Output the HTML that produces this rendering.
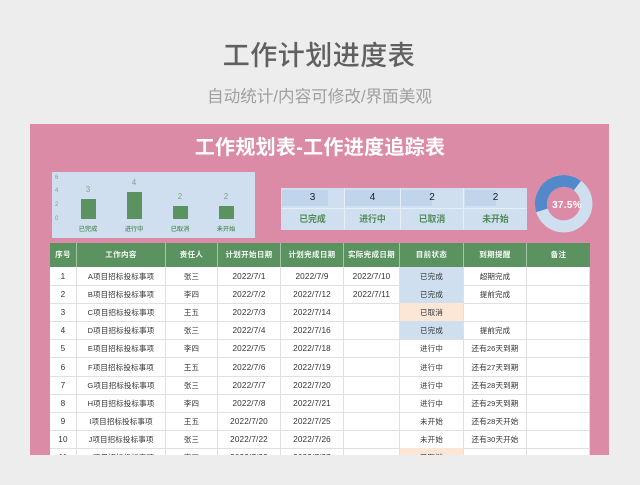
<!DOCTYPE html>
<html lang="zh">
<head>
<meta charset="utf-8">
<title>工作计划进度表</title>
<style>
html,body{margin:0;padding:0;width:640px;height:485px;overflow:hidden;background:#ededed}
body{position:relative;font-family:"Liberation Sans","Noto Sans CJK SC",sans-serif}
#w{position:absolute;left:0;top:0;width:640px;height:485px;background:#ededed;filter:blur(.3px)}
.a{position:absolute;text-align:center;white-space:nowrap}
#t1{left:0;width:638px;top:36.5px;font-size:27px;line-height:38px;color:#606060;letter-spacing:.5px;font-weight:500}
#t2{left:0;width:639px;top:86px;font-size:16.6px;line-height:22px;color:#a0a0a0}
#p{position:absolute;left:30px;top:124px;width:579px;height:331px;background:#db8ba6;overflow:hidden}
#t3{left:0;width:640px;top:134px;font-size:20px;line-height:28px;font-weight:bold;color:#fff;letter-spacing:.3px}
#chart{position:absolute;left:52px;top:172px;width:203px;height:66px;background:#d0dff0}
.bar{position:absolute;background:#5b9360;width:15px}
.yl{position:absolute;font-size:6px;line-height:8px;color:#8a9aa8;left:55px}
.vl{position:absolute;font-size:8px;line-height:10px;color:#7ea583;width:30px;text-align:center}
.xl{position:absolute;font-size:6.2px;line-height:9px;color:#4f8a55;width:40px;text-align:center;top:224.5px;font-weight:500}
#kpi{position:absolute;left:281px;top:188px;width:246px;height:42px;background:#d0dff0}
.kb{position:absolute;background:#c0d5ec;top:190px;height:16px}
.kl{position:absolute;background:#e6eef7}
.kn{position:absolute;top:191px;font-size:10px;line-height:14px;color:#222;text-align:center}
.kt{position:absolute;top:212px;font-size:8.9px;line-height:14px;color:#4f8a55;text-align:center;font-weight:700}
#tb{position:absolute;left:50px;top:243px;width:540px;height:212px;background:#fff;overflow:hidden}
.h{position:absolute;left:0;top:0;width:540px;height:24px;background:#5b9360}
.c{position:absolute;top:0;bottom:0;text-align:center;white-space:nowrap;overflow:hidden}
.r{position:absolute;left:0;width:540px;height:18px;font-size:7.5px;line-height:19px;color:#333;letter-spacing:.15px;border-bottom:1px solid #e0e0e0;box-sizing:content-box}
.h .c{font-size:7.5px;line-height:24px;color:#f4f8f4;font-weight:bold;letter-spacing:.35px;border-right:1px solid #a5c4a8;box-sizing:border-box}
.r .c{border-right:1px solid #e0e0e0;box-sizing:border-box}
.c1{left:0;width:27px}.c2{left:27px;width:89px}.c3{left:116px;width:52px}.c4{left:168px;width:63px}.c5{left:231px;width:63px}.c6{left:294px;width:56px}.c7{left:350px;width:64px}.c8{left:414px;width:63px}.c9{left:477px;width:63px}
.r .c1,.r .c4,.r .c5,.r .c6{font-size:8.2px}
.b{background:#d0dff0}.o{background:#fce6d6}
</style>
</head>
<body>
<div id="w">
<div class="a" id="t1">工作计划进度表</div>
<div class="a" id="t2">自动统计/内容可修改/界面美观</div>
<div id="p"></div>
<div class="a" id="t3">工作规划表-工作进度追踪表</div>

<div id="chart"></div>
<div class="yl" style="top:174px">6</div>
<div class="yl" style="top:187px">4</div>
<div class="yl" style="top:201px">2</div>
<div class="yl" style="top:215px">0</div>
<div class="bar" style="left:81px;top:199px;height:20px"></div>
<div class="bar" style="left:127px;top:192px;height:27px"></div>
<div class="bar" style="left:173px;top:205.5px;height:13.5px"></div>
<div class="bar" style="left:219px;top:205.5px;height:13.5px"></div>
<div class="vl" style="left:73px;top:185px">3</div>
<div class="vl" style="left:119px;top:178px">4</div>
<div class="vl" style="left:165px;top:192px">2</div>
<div class="vl" style="left:211px;top:192px">2</div>
<div class="xl" style="left:68px">已完成</div>
<div class="xl" style="left:114px">进行中</div>
<div class="xl" style="left:160px">已取消</div>
<div class="xl" style="left:206px">未开始</div>

<div id="kpi"></div>
<div class="kb" style="left:282px;width:46px"></div>
<div class="kb" style="left:345px;width:55px"></div>
<div class="kb" style="left:401px;width:31px"></div>
<div class="kb" style="left:465px;width:31px"></div>
<div class="kl" style="left:281px;top:208px;width:246px;height:1px"></div>
<div class="kl" style="left:344px;top:188px;width:1px;height:42px"></div>
<div class="kl" style="left:400px;top:188px;width:1px;height:42px"></div>
<div class="kl" style="left:463px;top:188px;width:1px;height:42px"></div>
<div class="kn" style="left:281px;width:63px">3</div>
<div class="kn" style="left:345px;width:55px">4</div>
<div class="kn" style="left:401px;width:62px">2</div>
<div class="kn" style="left:464px;width:63px">2</div>
<div class="kt" style="left:281px;width:63px">已完成</div>
<div class="kt" style="left:345px;width:55px">进行中</div>
<div class="kt" style="left:401px;width:62px">已取消</div>
<div class="kt" style="left:464px;width:63px">未开始</div>

<svg style="position:absolute;left:530px;top:170px" width="68" height="68" viewBox="0 0 68 68">
<circle cx="33.7" cy="33.7" r="22.7" fill="none" stroke="#d0dff0" stroke-width="12"/>
<circle cx="33.7" cy="33.7" r="22.7" fill="none" stroke="#5389cb" stroke-width="12" stroke-dasharray="57 150" transform="rotate(163 33.7 33.7)"/>
</svg>
<div class="a" style="left:537px;width:60px;top:198.5px;font-size:10px;line-height:14px;font-weight:bold;color:#fff;letter-spacing:.3px">37.5%</div>

<div id="tb">
<div class="h"><div class="c c1">序号</div><div class="c c2">工作内容</div><div class="c c3">责任人</div><div class="c c4">计划开始日期</div><div class="c c5">计划完成日期</div><div class="c c6">实际完成日期</div><div class="c c7">目前状态</div><div class="c c8">到期提醒</div><div class="c c9" style="border:0">备注</div></div>
<div class="r" style="top:24px"><div class="c c1">1</div><div class="c c2">A项目招标投标事项</div><div class="c c3">张三</div><div class="c c4">2022/7/1</div><div class="c c5">2022/7/9</div><div class="c c6">2022/7/10</div><div class="c c7 b">已完成</div><div class="c c8">超期完成</div><div class="c c9"></div></div>
<div class="r" style="top:42.1px"><div class="c c1">2</div><div class="c c2">B项目招标投标事项</div><div class="c c3">李四</div><div class="c c4">2022/7/2</div><div class="c c5">2022/7/12</div><div class="c c6">2022/7/11</div><div class="c c7 b">已完成</div><div class="c c8">提前完成</div><div class="c c9"></div></div>
<div class="r" style="top:60.2px"><div class="c c1">3</div><div class="c c2">C项目招标投标事项</div><div class="c c3">王五</div><div class="c c4">2022/7/3</div><div class="c c5">2022/7/14</div><div class="c c6"></div><div class="c c7 o">已取消</div><div class="c c8"></div><div class="c c9"></div></div>
<div class="r" style="top:78.3px"><div class="c c1">4</div><div class="c c2">D项目招标投标事项</div><div class="c c3">张三</div><div class="c c4">2022/7/4</div><div class="c c5">2022/7/16</div><div class="c c6"></div><div class="c c7 b">已完成</div><div class="c c8">提前完成</div><div class="c c9"></div></div>
<div class="r" style="top:96.4px"><div class="c c1">5</div><div class="c c2">E项目招标投标事项</div><div class="c c3">李四</div><div class="c c4">2022/7/5</div><div class="c c5">2022/7/18</div><div class="c c6"></div><div class="c c7">进行中</div><div class="c c8">还有26天到期</div><div class="c c9"></div></div>
<div class="r" style="top:114.5px"><div class="c c1">6</div><div class="c c2">F项目招标投标事项</div><div class="c c3">王五</div><div class="c c4">2022/7/6</div><div class="c c5">2022/7/19</div><div class="c c6"></div><div class="c c7">进行中</div><div class="c c8">还有27天到期</div><div class="c c9"></div></div>
<div class="r" style="top:132.6px"><div class="c c1">7</div><div class="c c2">G项目招标投标事项</div><div class="c c3">张三</div><div class="c c4">2022/7/7</div><div class="c c5">2022/7/20</div><div class="c c6"></div><div class="c c7">进行中</div><div class="c c8">还有28天到期</div><div class="c c9"></div></div>
<div class="r" style="top:150.7px"><div class="c c1">8</div><div class="c c2">H项目招标投标事项</div><div class="c c3">李四</div><div class="c c4">2022/7/8</div><div class="c c5">2022/7/21</div><div class="c c6"></div><div class="c c7">进行中</div><div class="c c8">还有29天到期</div><div class="c c9"></div></div>
<div class="r" style="top:168.8px"><div class="c c1">9</div><div class="c c2">I项目招标投标事项</div><div class="c c3">王五</div><div class="c c4">2022/7/20</div><div class="c c5">2022/7/25</div><div class="c c6"></div><div class="c c7">未开始</div><div class="c c8">还有28天开始</div><div class="c c9"></div></div>
<div class="r" style="top:186.9px"><div class="c c1">10</div><div class="c c2">J项目招标投标事项</div><div class="c c3">张三</div><div class="c c4">2022/7/22</div><div class="c c5">2022/7/26</div><div class="c c6"></div><div class="c c7">未开始</div><div class="c c8">还有30天开始</div><div class="c c9"></div></div>
<div class="r" style="top:205px"><div class="c c1">11</div><div class="c c2">K项目招标投标事项</div><div class="c c3">李四</div><div class="c c4">2022/7/23</div><div class="c c5">2022/7/27</div><div class="c c6"></div><div class="c c7 o">已取消</div><div class="c c8"></div><div class="c c9"></div></div>
</div>
</div>
</body>
</html>
